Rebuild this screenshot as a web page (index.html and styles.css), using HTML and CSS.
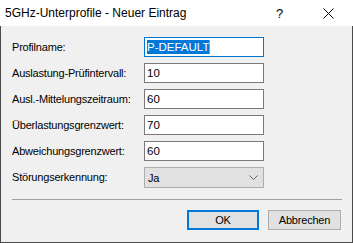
FILE: index.html
```html
<!DOCTYPE html>
<html lang="de">
<head>
  <meta charset="UTF-8" />
  <title>5GHz-Unterprofile - Neuer Eintrag</title>
  <link rel="stylesheet" href="styles.css">
</head>
<body>

  <div class="window">
    <div class="titlebar">
      <div class="title">5GHz-Unterprofile - Neuer Eintrag</div>
      <div class="help">?</div>
      <div class="close">
        <svg width="11" height="11" viewBox="0 0 11 11">
          <path d="M0.5 0.5 L10.5 10.5 M10.5 0.5 L0.5 10.5" stroke="#000" stroke-width="1" fill="none" />
        </svg>
      </div>
    </div>

    <div class="content">
      <div class="form">
        <div class="row">
          <label>Profilname:</label>
          <div class="field focused"><span class="selected">P-DEFAULT</span><span class="caret"></span></div>
        </div>
        <div class="row">
          <label>Auslastung-Prüfintervall:</label>
          <div class="field">10</div>
        </div>
        <div class="row">
          <label>Ausl.-Mittelungszeitraum:</label>
          <div class="field">60</div>
        </div>
        <div class="row">
          <label>Überlastungsgrenzwert:</label>
          <div class="field">70</div>
        </div>
        <div class="row">
          <label>Abweichungsgrenzwert:</label>
          <div class="field">60</div>
        </div>
        <div class="row">
          <label>Störungserkennung:</label>
          <div class="select">
            <span>Ja</span>
            <svg width="9" height="5" viewBox="0 0 9 5">
              <path d="M0.5 0.5 L4.5 4.5 L8.5 0.5" stroke="#606060" stroke-width="1" fill="none" />
            </svg>
          </div>
        </div>
      </div>

      <hr class="separator" />

      <div class="buttons">
        <button class="btn default">OK</button>
        <button class="btn">Abbrechen</button>
      </div>
    </div>
  </div>

</body>
</html>
```

FILE: styles.css
```css
body {
  margin: 0;
  font-family: 'Liberation Sans', Arial, sans-serif;
  font-size: 11px;
  letter-spacing: -0.2px;
  color: #000;
  background-color: #f0f0f0;
}

.window {
  width: 353px;
  height: 243px;
  box-sizing: border-box;
  border: 1px solid #4a4a4a;
  border-top: none;
  background-color: #f0f0f0;
  display: flex;
  flex-direction: column;
}

.titlebar {
  height: 26px;
  background-color: #fff;
  display: flex;
  align-items: center;
  margin: 0 -1px;
}

.title {
  flex: 1;
  padding-left: 5px;
  font-size: 12px;
  letter-spacing: 0;
}

.help {
  width: 12px;
  font-size: 13px;
  letter-spacing: 0;
  margin-right: 35px;
}

.close {
  width: 11px;
  height: 11px;
  margin-right: 19px;
  display: flex;
}

.content {
  padding: 11px 11px 0 11px;
}

.form {
  display: flex;
  flex-direction: column;
  gap: 6px;
}

.row {
  display: flex;
  align-items: center;
  height: 20px;
}

.row label {
  width: 132px;
  white-space: nowrap;
}

.field {
  width: 120px;
  height: 20px;
  box-sizing: border-box;
  border: 1px solid #7a7a7a;
  background-color: #fff;
  padding-left: 2px;
  display: flex;
  align-items: center;
  font-size: 11.5px;
  letter-spacing: 0;
}

.field.focused {
  border-color: #0078d7;
}

.selected {
  background-color: #0078d7;
  color: #fff;
  padding: 1px 0;
}

.caret {
  width: 1px;
  height: 14px;
  background-color: #ff8a1c;
}

.select {
  width: 120px;
  height: 21px;
  box-sizing: border-box;
  border: 1px solid #adadad;
  background-color: #e1e1e1;
  padding: 0 5px 0 3px;
  display: flex;
  align-items: center;
  justify-content: space-between;
  margin-top: 1px;
}

.separator {
  border: none;
  border-top: 1px solid #a0a0a0;
  margin: 12px 0 0 0;
  width: 330px;
}

.buttons {
  display: flex;
  justify-content: flex-end;
  gap: 9px;
  margin-top: 10px;
}

.btn {
  font-family: 'Liberation Sans', Arial, sans-serif;
  font-size: 11px;
  letter-spacing: -0.2px;
  color: #000;
  height: 20px;
  width: 73px;
  padding: 0;
  background-color: #e1e1e1;
  border: 1px solid #adadad;
}

.btn.default {
  width: 72px;
  border: 2px solid #0078d7;
}
```
